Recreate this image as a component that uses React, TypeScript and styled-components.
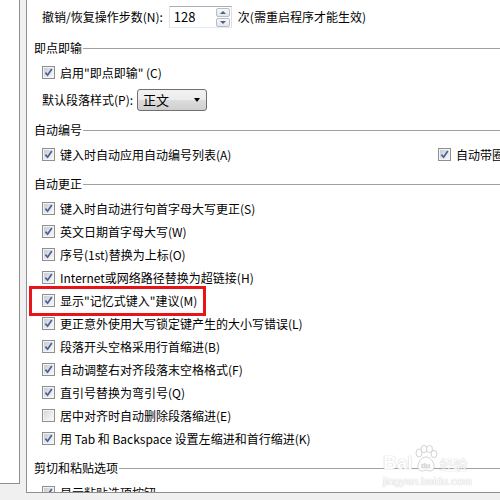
import React from "react";
import styled, { createGlobalStyle } from "styled-components";

const Global = createGlobalStyle`
  html, body { margin: 0; padding: 0; background: #f0f0f0; }
  body {
    font-family: "Noto Sans CJK SC", "Microsoft YaHei", sans-serif;
    font-size: 12px;
    color: #000;
  }
`;

const Window = styled.div`
  display: flex;
  width: 500px;
  height: 500px;
  overflow: hidden;
  background: #f0f0f0;
`;

const NavPane = styled.div`
  flex: none;
  width: 19px;
  height: 483px;
  background: #fff;
  border-right: 1px solid #8e8f8f;
  border-bottom: 1px solid #8e8f8f;
`;

const Panel = styled.div`
  position: relative;
  flex: 1;
  height: 492px;
  margin-left: 6px;
  background: #fff;
  border-left: 1px solid #8e8f8f;
  border-bottom: 1px solid #8e8f8f;
  overflow: hidden;
  display: flex;
  flex-direction: column;
`;

const TopRow = styled.div`
  flex: none;
  height: 34px;
  display: flex;
  align-items: center;
  padding-left: 15px;
  white-space: nowrap;
  line-height: 16px;
`;

const Label = styled.span`
  white-space: nowrap;
  line-height: 16px;
`;

const SpinBox = styled.div`
  flex: none;
  width: 63px;
  height: 22px;
  box-sizing: border-box;
  margin: 0 6px 0 6px;
  border: 1px solid;
  border-color: #abadb3 #dbdfe6 #e3e9ef #e2e3ea;
  display: flex;
  align-items: center;
  justify-content: space-between;
  padding: 0 1px 0 4px;
  font-size: 13px;
`;

const SpinButtons = styled.div`
  display: flex;
  flex-direction: column;
  gap: 1px;
`;

const SpinButton = styled.div`
  width: 14px;
  height: 9px;
  box-sizing: border-box;
  border: 1px solid #b8bcc4;
  border-radius: 2px;
  background: linear-gradient(#f7f7f7, #e3e6ea);
  display: flex;
  align-items: center;
  justify-content: center;
`;

const Arrow = styled.span<{ $dir: "up" | "down" }>`
  width: 0;
  height: 0;
  border-left: 3px solid transparent;
  border-right: 3px solid transparent;
  ${(p) =>
    p.$dir === "up"
      ? "border-bottom: 3px solid #4d6185;"
      : "border-top: 3px solid #4d6185;"}
`;

const Header = styled.div<{ $gap: number }>`
  flex: none;
  height: 26px;
  margin-top: ${(p) => p.$gap}px;
  display: flex;
  align-items: center;
  padding-left: 7px;
  white-space: nowrap;
  line-height: 16px;
`;

const HeaderLine = styled.div`
  flex: 1;
  height: 1px;
  margin-left: 1px;
  background: #a0a0a0;
`;

const Row = styled.div<{ $h?: number }>`
  position: relative;
  flex: none;
  height: ${(p) => p.$h ?? 23}px;
  display: flex;
  align-items: center;
  padding-left: 15px;
  white-space: nowrap;
  line-height: 16px;
`;

const Item = styled.label<{ $w?: number }>`
  flex: none;
  display: flex;
  align-items: center;
  gap: 5px;
  ${(p) => (p.$w ? `width: ${p.$w}px;` : "")}
`;

const Box = styled.span<{ $on: boolean }>`
  flex: none;
  width: 13px;
  height: 13px;
  box-sizing: border-box;
  border: 1px solid #8e8f8f;
  padding: 1px;
  background: #f4f4f4;
  display: flex;
`;

const BoxInner = styled.span<{ $on: boolean }>`
  flex: 1;
  display: flex;
  align-items: center;
  justify-content: center;
  background: ${(p) =>
    p.$on
      ? "linear-gradient(135deg, #c5cad2 0%, #e6e8eb 60%, #f6f6f6 100%)"
      : "linear-gradient(135deg, #d4d6d9 0%, #ececec 60%, #f8f8f8 100%)"};
`;

const Combo = styled.div`
  flex: none;
  width: 70px;
  height: 22px;
  box-sizing: border-box;
  margin-left: 4px;
  border: 1px solid #707070;
  border-radius: 3px;
  background: linear-gradient(#f2f2f2 0%, #ebebeb 50%, #dddddd 51%, #cfcfcf 100%);
  display: flex;
  align-items: center;
  justify-content: space-between;
  padding: 0 6px 0 5px;
  font-size: 13px;
`;

const ComboArrow = styled.span`
  width: 0;
  height: 0;
  border-left: 3.5px solid transparent;
  border-right: 3.5px solid transparent;
  border-top: 4px solid #000;
`;

const Highlight = styled.div`
  position: absolute;
  left: 2px;
  top: -3px;
  width: 177px;
  height: 30px;
  box-sizing: border-box;
  border: 3px solid #e8141a;
  pointer-events: none;
`;

const Watermark = styled.div`
  position: absolute;
  left: 356px;
  top: 443px;
  display: flex;
  flex-direction: column;
  align-items: flex-start;
  color: #fff;
  text-shadow: 0 0 1px #c8c8c8, 0 0 1px #c8c8c8;
  font-family: "Liberation Sans", Arial, sans-serif;
  opacity: 0.9;
  pointer-events: none;
`;

const MarkTop = styled.div`
  display: flex;
  align-items: flex-end;
  height: 30px;
`;

const MarkBig = styled.span`
  font-size: 19px;
  font-weight: bold;
  line-height: 20px;
`;

const MarkCn = styled.span`
  font-family: "Noto Sans CJK SC", sans-serif;
  font-size: 14px;
  line-height: 18px;
  margin-left: 1px;
`;

const MarkUrl = styled.span`
  font-size: 11px;
  line-height: 13px;
  margin-top: 2px;
`;

const Check = ({ on }: { on: boolean }) => (
  <Box $on={on}>
    <BoxInner $on={on}>
      {on && (
        <svg width="9" height="9" viewBox="0 0 9 9">
          <path
            d="M1.4 4.6 L3.6 7.2 L7.8 1"
            fill="none"
            stroke="#4a5f97"
            strokeWidth="1.7"
          />
        </svg>
      )}
    </BoxInner>
  </Box>
);

const Paw = () => (
  <svg width="26" height="28" viewBox="0 0 26 28">
    <g fill="#fff" stroke="#cfcfcf" strokeWidth="1">
      <ellipse cx="6" cy="8" rx="3" ry="4" />
      <ellipse cx="11" cy="4" rx="3" ry="3.6" />
      <ellipse cx="16.5" cy="4" rx="3" ry="3.6" />
      <ellipse cx="21" cy="9" rx="3" ry="3.6" />
      <path d="M13 12 C8 12 4 19 5 23 C6 27 10 26 13 25 C16 26 20 27 21 23 C22 19 18 12 13 12 Z" />
    </g>
    <text x="8" y="23" fontSize="8" fontFamily="Liberation Sans, sans-serif" fill="#d6d6d6">
      du
    </text>
  </svg>
);

type Opt = { text: string; on: boolean; mark?: boolean };

const autoCorrect: Opt[] = [
  { text: "键入时自动进行句首字母大写更正(S)", on: true },
  { text: "英文日期首字母大写(W)", on: true },
  { text: "序号(1st)替换为上标(O)", on: true },
  { text: "Internet或网络路径替换为超链接(H)", on: true },
  { text: '显示"记忆式键入"建议(M)', on: true, mark: true },
  { text: "更正意外使用大写锁定键产生的大小写错误(L)", on: true },
  { text: "段落开头空格采用行首缩进(B)", on: true },
  { text: "自动调整右对齐段落末空格格式(F)", on: true },
  { text: "直引号替换为弯引号(Q)", on: true },
  { text: "居中对齐时自动删除段落缩进(E)", on: false },
  { text: "用 Tab 和 Backspace 设置左缩进和首行缩进(K)", on: true },
];

export default function App() {
  return (
    <>
      <Global />
      <Window>
        <NavPane />
        <Panel>
          <TopRow>
            <Label>撤销/恢复操作步数(N):</Label>
            <SpinBox>
              <span>128</span>
              <SpinButtons>
                <SpinButton>
                  <Arrow $dir="up" />
                </SpinButton>
                <SpinButton>
                  <Arrow $dir="down" />
                </SpinButton>
              </SpinButtons>
            </SpinBox>
            <Label>次(需重启程序才能生效)</Label>
          </TopRow>

          <Header $gap={1}>
            <span>即点即输</span>
            <HeaderLine />
          </Header>
          <Row>
            <Item>
              <Check on />
              <span>启用"即点即输" (C)</span>
            </Item>
          </Row>
          <Row $h={32}>
            <Label>默认段落样式(P):</Label>
            <Combo>
              <span>正文</span>
              <ComboArrow />
            </Combo>
          </Row>

          <Header $gap={1}>
            <span>自动编号</span>
            <HeaderLine />
          </Header>
          <Row>
            <Item $w={396}>
              <Check on />
              <span>键入时自动应用自动编号列表(A)</span>
            </Item>
            <Item>
              <Check on />
              <span>自动带圈字符(C)</span>
            </Item>
          </Row>

          <Header $gap={5}>
            <span>自动更正</span>
            <HeaderLine />
          </Header>
          {autoCorrect.map((o) => (
            <Row key={o.text}>
              <Item>
                <Check on={o.on} />
                <span>{o.text}</span>
              </Item>
              {o.mark && <Highlight />}
            </Row>
          ))}

          <Header $gap={5}>
            <span>剪切和粘贴选项</span>
            <HeaderLine />
          </Header>
          <Row>
            <Item>
              <Check on />
              <span>显示粘贴选项按钮</span>
            </Item>
          </Row>

          <Watermark>
            <MarkTop>
              <MarkBig>Bai</MarkBig>
              <Paw />
              <MarkCn>经验</MarkCn>
            </MarkTop>
            <MarkUrl>jingyan.baidu.com</MarkUrl>
          </Watermark>
        </Panel>
      </Window>
    </>
  );
}
